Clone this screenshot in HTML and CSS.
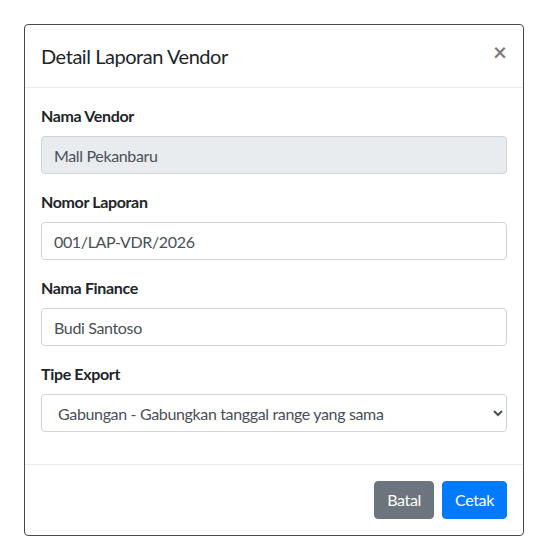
FILE: index.html
```html
<!DOCTYPE html>
<html lang="id">
<head>
    <meta charset="UTF-8">
    <meta name="viewport" content="width=device-width, initial-scale=1.0">
    <title>Detail Laporan Vendor</title>
    <link rel="stylesheet" href="styles.css">
</head>
<body>
    <div class="modal-content">
        <div class="modal-header">
            <h5 class="modal-title">Detail Laporan Vendor</h5>
            <button type="button" class="close" aria-label="Close"><span aria-hidden="true">&times;</span></button>
        </div>

        <div class="modal-body">
            <div class="form-group">
                <label for="namaVendor">Nama Vendor</label>
                <input type="text" id="namaVendor" class="form-control" value="Mall Pekanbaru" readonly>
            </div>
            <div class="form-group">
                <label for="nomorLaporan">Nomor Laporan</label>
                <input type="text" id="nomorLaporan" class="form-control" value="001/LAP-VDR/2026">
            </div>
            <div class="form-group">
                <label for="namaFinance">Nama Finance</label>
                <input type="text" id="namaFinance" class="form-control" value="Budi Santoso">
            </div>
            <div class="form-group">
                <label for="tipeExport">Tipe Export</label>
                <select id="tipeExport" class="form-control">
                    <option value="gabungan">Gabungan - Gabungkan tanggal range yang sama</option>
                    <option value="terpisah">Terpisah - Satu baris per tanggal</option>
                </select>
            </div>
        </div>

        <div class="modal-footer">
            <button type="button" class="btn btn-secondary">Batal</button>
            <button type="button" class="btn btn-primary">Cetak</button>
        </div>
    </div>
</body>
</html>
```

FILE: styles.css
```css
:root {
    --text-color: #212529;
    --border-color: #ced4da;
    --divider: #e9ecef;
    --readonly-bg: #e9ecef;
    --secondary: #6c757d;
    --primary: #007bff;
}

* {
    box-sizing: border-box;
}

body {
    margin: 0;
    padding: 24px;
    background: #fff;
    color: var(--text-color);
    font-family: 'Lato', 'Liberation Sans', sans-serif;
    font-size: 16px;
    line-height: 1.5;
    letter-spacing: -0.35px;
}

.modal-content {
    width: 500px;
    background: #fff;
    border: 1px solid #494949;
    border-radius: 4px;
}

.modal-header {
    display: flex;
    align-items: flex-start;
    justify-content: space-between;
    padding: 16px;
    border-bottom: 1px solid var(--divider);
}

.modal-title {
    margin: 0;
    font-size: 20px;
    font-weight: 400;
    line-height: 1.5;
    letter-spacing: -0.45px;
}

.close {
    padding: 0;
    margin: -1px 0 0;
    background: transparent;
    border: 0;
    font-family: inherit;
    font-size: 24px;
    font-weight: 700;
    line-height: 1;
    color: #000;
    opacity: 0.5;
    text-shadow: 0 1px 0 #fff;
    cursor: pointer;
}

.modal-body {
    padding: 16px;
}

.form-group {
    margin-bottom: 16px;
}

.form-group label {
    display: inline-block;
    margin-bottom: 8px;
    font-weight: 700;
}

.form-control {
    display: block;
    width: 100%;
    height: 38px;
    padding: 6px 12px;
    font-family: inherit;
    font-size: 16px;
    line-height: 1.5;
    letter-spacing: inherit;
    color: #495057;
    background: #fff;
    border: 1px solid var(--border-color);
    border-radius: 4px;
}

.form-control[readonly] {
    background: var(--readonly-bg);
}

.modal-footer {
    display: flex;
    justify-content: flex-end;
    align-items: center;
    padding: 12px;
    border-top: 1px solid var(--divider);
}

.btn {
    margin: 4px;
    height: 38px;
    padding: 6px 12px;
    font-family: inherit;
    font-size: 16px;
    line-height: 1.5;
    letter-spacing: inherit;
    color: #fff;
    border: 1px solid transparent;
    border-radius: 4px;
    cursor: pointer;
}

.btn-secondary {
    background: var(--secondary);
    border-color: var(--secondary);
}

.btn-primary {
    background: var(--primary);
    border-color: var(--primary);
}
```
